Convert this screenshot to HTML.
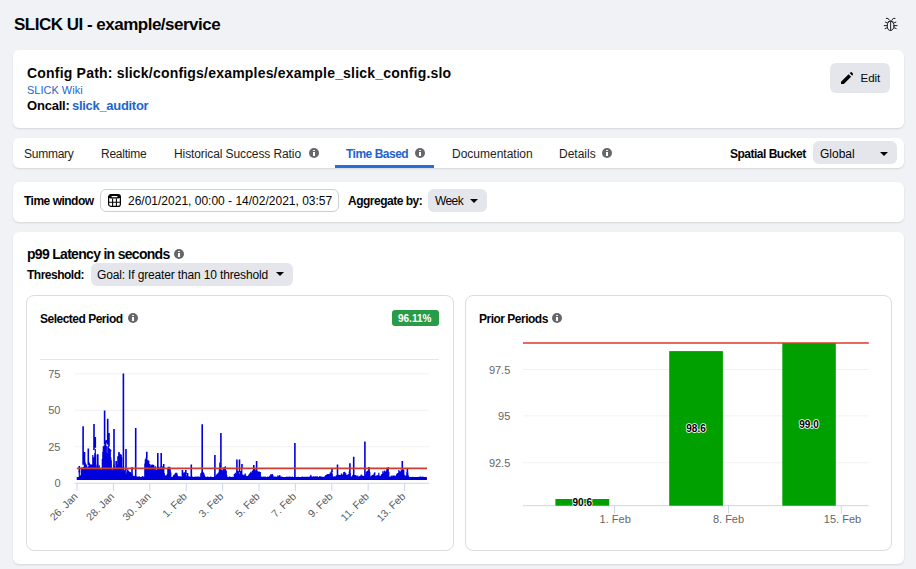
<!DOCTYPE html>
<html><head><meta charset="utf-8">
<style>
*{box-sizing:border-box;margin:0;padding:0}
html,body{width:916px;height:569px;overflow:hidden;background:#f0f2f5;font-family:"Liberation Sans",sans-serif;color:#1c1e21}
.a{position:absolute;white-space:nowrap}
.card{position:absolute;background:#fff;border-radius:6px;box-shadow:0 1px 2px rgba(0,0,0,0.12)}
.b{font-weight:700}
.info{position:absolute;width:10px;height:10px;border-radius:50%;background:#65676b}
.info:before{content:"";position:absolute;left:4.2px;top:1.6px;width:1.6px;height:1.6px;background:#fff;border-radius:50%}
.info:after{content:"";position:absolute;left:4.2px;top:4px;width:1.6px;height:4.3px;background:#fff}
.dd{position:absolute;background:#e4e6eb;border-radius:6px}
.caret{position:absolute;width:0;height:0;border-left:5px solid transparent;border-right:5px solid transparent;border-top:5px solid #050505}
.inner{position:absolute;background:#fff;border:1px solid #dcdcdc;border-radius:8px}
</style></head><body>

<div class="a b" style="left:14px;top:15px;font-size:17px;letter-spacing:-0.5px;color:#050505">SLICK UI - example/service</div>
<!-- bug icon -->
<svg class="a" style="left:878px;top:12px" width="24" height="24" viewBox="0 0 24 24" fill="none" stroke="#1c1e21" stroke-width="1" stroke-linecap="round">
 <ellipse cx="12.65" cy="13.9" rx="3.4" ry="4.6"/>
 <path d="M12.65 10v8.2M10 9.9Q12.65 7.2 15.3 9.9M8.3 6.4h1.8l1.1 1.6M17 6.4h-1.8l-1.1 1.6M7.4 10.1l1.9 0.8M17.9 10.1l-1.9 0.8M6.2 13.6h3M19.1 13.6h-3M7.1 16.6l2-0.9M18.2 16.6l-2-0.9"/>
</svg>

<!-- card 1 -->
<div class="card" style="left:13px;top:50px;width:891px;height:78px"></div>
<div class="a b" style="left:27px;top:65px;font-size:14px;letter-spacing:0.2px;color:#050505">Config Path: slick/configs/examples/example_slick_config.slo</div>
<div class="a" style="left:27px;top:84px;font-size:11px;color:#1d64cf">SLICK Wiki</div>
<div class="a b" style="left:27px;top:98px;font-size:13px;letter-spacing:-0.2px;color:#050505">Oncall:</div>
<div class="a b" style="left:72px;top:98px;font-size:13px;letter-spacing:-0.3px;color:#1d64cf">slick_auditor</div>
<div class="dd" style="left:830px;top:63px;width:60px;height:30px"></div>
<svg class="a" style="left:841px;top:72px" width="12.3" height="12.3" viewBox="0 0 13 13"><path d="M0 10.3V13h2.7l8-8-2.7-2.7zM12.6 2.7a.7.7 0 0 0 0-1L11.3.2a.7.7 0 0 0-1 0L9.2 1.3l2.7 2.7z" fill="#050505"/></svg>
<div class="a" style="left:860.5px;top:71.5px;font-size:11.5px;color:#050505">Edit</div>

<!-- card 2 tabs -->
<div class="card" style="left:13px;top:138px;width:891px;height:30px"></div>
<div class="a" style="left:24px;top:147px;font-size:12px;letter-spacing:-0.25px;color:#1c1e21">Summary</div>
<div class="a" style="left:101px;top:147px;font-size:12px;letter-spacing:-0.25px;color:#1c1e21">Realtime</div>
<div class="a" style="left:174px;top:147px;font-size:12px;letter-spacing:-0.1px;color:#1c1e21">Historical Success Ratio</div>
<div class="info" style="left:309px;top:148px"></div>
<div class="a b" style="left:346px;top:147px;font-size:12px;letter-spacing:-0.5px;color:#1d64cf">Time Based</div>
<div class="info" style="left:415px;top:148px"></div>
<div style="position:absolute;left:335px;top:165px;width:99px;height:3px;background:#2a6dd6"></div>
<div class="a" style="left:452px;top:147px;font-size:12px;color:#1c1e21">Documentation</div>
<div class="a" style="left:559px;top:147px;font-size:12px;color:#1c1e21">Details</div>
<div class="info" style="left:602px;top:148px"></div>
<div class="a b" style="left:730px;top:147px;font-size:12px;letter-spacing:-0.5px;color:#050505">Spatial Bucket</div>
<div class="dd" style="left:813px;top:141px;width:84px;height:23px"></div>
<div class="a" style="left:820px;top:147px;font-size:12px;color:#050505">Global</div>
<div class="caret" style="left:879.5px;top:152px;border-left-width:4px;border-right-width:4px;border-top-width:4.5px"></div>

<!-- card 3 time window -->
<div class="card" style="left:13px;top:182px;width:891px;height:40px"></div>
<div class="a b" style="left:24px;top:194px;font-size:12px;letter-spacing:-0.5px;color:#050505">Time window</div>
<div style="position:absolute;left:100px;top:189px;width:239px;height:23px;border:1px solid #ccd0d5;border-radius:6px;background:#fff"></div>
<svg class="a" style="left:108px;top:194px" width="13" height="13" viewBox="0 0 13 13">
 <rect x="0.6" y="0.6" width="11.8" height="11.8" rx="2.5" fill="none" stroke="#050505" stroke-width="1.2"/>
 <rect x="0.6" y="0.6" width="11.8" height="4" rx="2" fill="#050505"/>
 <rect x="3.5" y="2.1" width="6" height="1.2" rx="0.6" fill="#fff"/>
 <path d="M0.6 8.2h11.8M4.6 4.5v8M8.4 4.5v8" stroke="#050505" stroke-width="1.1"/>
</svg>
<div class="a" style="left:128px;top:194px;font-size:12px;color:#050505">26/01/2021, 00:00 - 14/02/2021, 03:57</div>
<div class="a b" style="left:348px;top:194px;font-size:12px;letter-spacing:-0.5px;color:#050505">Aggregate by:</div>
<div class="dd" style="left:428px;top:189px;width:59px;height:23px"></div>
<div class="a" style="left:435px;top:194px;font-size:12px;letter-spacing:-0.6px;color:#050505">Week</div>
<div class="caret" style="left:470px;top:199px;border-left-width:4px;border-right-width:4px;border-top-width:4px"></div>

<!-- main card -->
<div class="card" style="left:13px;top:232px;width:891px;height:332px"></div>
<div class="a b" style="left:27px;top:246px;font-size:14px;letter-spacing:-0.7px;color:#050505">p99 Latency in seconds</div>
<div class="info" style="left:174px;top:249px"></div>
<div class="a b" style="left:27px;top:268px;font-size:12px;letter-spacing:-0.5px;color:#050505">Threshold:</div>
<div class="dd" style="left:91px;top:263px;width:202px;height:23px"></div>
<div class="a" style="left:97px;top:268px;font-size:12px;letter-spacing:-0.15px;color:#050505">Goal: If greater than 10 threshold</div>
<div class="caret" style="left:276px;top:272px;border-left-width:4px;border-right-width:4px;border-top-width:4px"></div>

<!-- left chart card -->
<div class="inner" style="left:26px;top:295px;width:428px;height:256px"></div>
<div class="a b" style="left:40px;top:312px;font-size:12px;letter-spacing:-0.5px;color:#050505">Selected Period</div>
<div class="info" style="left:128px;top:313px"></div>
<div style="position:absolute;left:392px;top:310px;width:47px;height:16px;border-radius:3px;background:#2a9c48"></div>
<div class="a b" style="left:398px;top:313px;font-size:10px;color:#fff">96.11%</div>
<div style="position:absolute;left:40px;top:359px;width:399px;height:1px;background:#e4e6eb"></div>

<!-- right chart card -->
<div class="inner" style="left:465px;top:295px;width:427px;height:256px"></div>
<div class="a b" style="left:479px;top:312px;font-size:12px;letter-spacing:-0.5px;color:#050505">Prior Periods</div>
<div class="info" style="left:552px;top:313px"></div>

<!--CHARTS-->
<svg class="a" style="left:0;top:0" width="916" height="569" viewBox="0 0 916 569" font-family="Liberation Sans, sans-serif">
<path d="M74.4 373.8H429" stroke="#f1f1f1" stroke-width="1"/>
<path d="M74.4 410.3H429" stroke="#f1f1f1" stroke-width="1"/>
<path d="M74.4 446.8H429" stroke="#f1f1f1" stroke-width="1"/>
<path d="M74.4 483.3H429" stroke="#ccd6eb" stroke-width="1"/>
<path d="M77.0 483.3V491" stroke="#ccd6eb" stroke-width="1"/>
<path d="M113.4 483.3V491" stroke="#ccd6eb" stroke-width="1"/>
<path d="M149.8 483.3V491" stroke="#ccd6eb" stroke-width="1"/>
<path d="M186.2 483.3V491" stroke="#ccd6eb" stroke-width="1"/>
<path d="M222.6 483.3V491" stroke="#ccd6eb" stroke-width="1"/>
<path d="M259.0 483.3V491" stroke="#ccd6eb" stroke-width="1"/>
<path d="M295.4 483.3V491" stroke="#ccd6eb" stroke-width="1"/>
<path d="M331.8 483.3V491" stroke="#ccd6eb" stroke-width="1"/>
<path d="M368.2 483.3V491" stroke="#ccd6eb" stroke-width="1"/>
<path d="M404.6 483.3V491" stroke="#ccd6eb" stroke-width="1"/>
<text x="60.5" y="377.8" text-anchor="end" font-size="11" fill="#666">75</text>
<text x="60.5" y="414.3" text-anchor="end" font-size="11" fill="#666">50</text>
<text x="60.5" y="450.8" text-anchor="end" font-size="11" fill="#666">25</text>
<text x="60.5" y="487.3" text-anchor="end" font-size="11" fill="#666">0</text>
<text x="78.5" y="497" text-anchor="end" font-size="10.5" fill="#5a5a5a" transform="rotate(-45 78.5 497)">26. Jan</text>
<text x="114.9" y="497" text-anchor="end" font-size="10.5" fill="#5a5a5a" transform="rotate(-45 114.9 497)">28. Jan</text>
<text x="151.3" y="497" text-anchor="end" font-size="10.5" fill="#5a5a5a" transform="rotate(-45 151.3 497)">30. Jan</text>
<text x="187.7" y="497" text-anchor="end" font-size="10.5" fill="#5a5a5a" transform="rotate(-45 187.7 497)">1. Feb</text>
<text x="224.1" y="497" text-anchor="end" font-size="10.5" fill="#5a5a5a" transform="rotate(-45 224.1 497)">3. Feb</text>
<text x="260.5" y="497" text-anchor="end" font-size="10.5" fill="#5a5a5a" transform="rotate(-45 260.5 497)">5. Feb</text>
<text x="296.9" y="497" text-anchor="end" font-size="10.5" fill="#5a5a5a" transform="rotate(-45 296.9 497)">7. Feb</text>
<text x="333.3" y="497" text-anchor="end" font-size="10.5" fill="#5a5a5a" transform="rotate(-45 333.3 497)">9. Feb</text>
<text x="369.7" y="497" text-anchor="end" font-size="10.5" fill="#5a5a5a" transform="rotate(-45 369.7 497)">11. Feb</text>
<text x="406.1" y="497" text-anchor="end" font-size="10.5" fill="#5a5a5a" transform="rotate(-45 406.1 497)">13. Feb</text>
<path d="M77.30 479.9V477.0M77.80 479.9V477.1M78.30 479.9V476.9M78.80 479.9V477.0M79.30 479.9V471.1M79.80 479.9V475.9M80.30 479.9V476.6M80.80 479.9V475.0M81.30 479.9V469.2M81.80 479.9V467.4M82.30 479.9V469.1M82.80 479.9V468.5M83.30 479.9V467.0M83.80 479.9V471.8M84.30 479.9V462.3M84.80 479.9V463.1M85.30 479.9V462.4M85.80 479.9V468.0M86.30 479.9V464.4M86.80 479.9V466.2M87.30 479.9V468.9M87.80 479.9V469.3M88.30 479.9V466.7M88.80 479.9V465.9M89.30 479.9V462.6M89.80 479.9V472.9M90.30 479.9V464.3M90.80 479.9V464.4M91.30 479.9V470.0M91.80 479.9V464.6M92.30 479.9V471.4M92.80 479.9V454.9M93.30 479.9V457.4M93.80 479.9V458.7M94.30 479.9V456.8M94.80 479.9V453.0M95.30 479.9V448.9M95.80 479.9V454.6M96.30 479.9V466.5M96.80 479.9V467.5M97.30 479.9V464.6M97.80 479.9V464.3M98.30 479.9V467.2M98.80 479.9V466.4M99.30 479.9V465.2M99.80 479.9V469.0M100.30 479.9V468.8M100.80 479.9V470.1M101.30 479.9V473.0M101.80 479.9V467.8M102.30 479.9V458.9M102.80 479.9V451.7M103.30 479.9V446.3M103.80 479.9V454.4M104.30 479.9V445.3M104.80 479.9V452.7M105.30 479.9V442.0M105.80 479.9V441.0M106.30 479.9V445.9M106.80 479.9V453.2M107.30 479.9V457.4M107.80 479.9V446.5M108.30 479.9V445.7M108.80 479.9V453.0M109.30 479.9V448.3M109.80 479.9V467.1M110.30 479.9V449.2M110.80 479.9V457.6M111.30 479.9V460.3M111.80 479.9V471.6M112.30 479.9V470.3M112.80 479.9V468.4M113.30 479.9V469.2M113.80 479.9V464.8M114.30 479.9V465.6M114.80 479.9V465.6M115.30 479.9V468.6M115.80 479.9V470.1M116.30 479.9V463.2M116.80 479.9V471.5M117.30 479.9V464.6M117.80 479.9V456.3M118.30 479.9V467.3M118.80 479.9V453.9M119.30 479.9V455.8M119.80 479.9V453.8M120.30 479.9V455.9M120.80 479.9V454.2M121.30 479.9V455.0M121.80 479.9V457.0M122.30 479.9V466.7M122.80 479.9V471.2M123.30 479.9V474.7M123.80 479.9V469.9M124.30 479.9V471.4M124.80 479.9V470.5M125.30 479.9V469.4M125.80 479.9V473.8M126.30 479.9V474.2M126.80 479.9V471.2M127.30 479.9V470.3M127.80 479.9V469.2M128.30 479.9V473.0M128.80 479.9V471.1M129.30 479.9V473.2M129.80 479.9V472.1M130.30 479.9V471.9M130.80 479.9V473.1M131.30 479.9V474.1M131.80 479.9V473.5M132.30 479.9V475.1M132.80 479.9V475.7M133.30 479.9V475.8M133.80 479.9V475.7M134.30 479.9V476.1M134.80 479.9V477.1M135.30 479.9V477.1M135.80 479.9V476.9M136.30 479.9V476.7M136.80 479.9V476.2M137.30 479.9V476.8M137.80 479.9V477.1M138.30 479.9V477.1M138.80 479.9V476.6M139.30 479.9V476.3M139.80 479.9V477.1M140.30 479.9V477.1M140.80 479.9V477.1M141.30 479.9V477.1M141.80 479.9V476.8M142.30 479.9V476.5M142.80 479.9V476.1M143.30 479.9V477.1M143.80 479.9V477.1M144.30 479.9V476.8M144.80 479.9V463.4M145.30 479.9V459.6M145.80 479.9V458.7M146.30 479.9V457.3M146.80 479.9V457.8M147.30 479.9V464.1M147.80 479.9V459.8M148.30 479.9V462.8M148.80 479.9V460.8M149.30 479.9V464.2M149.80 479.9V464.1M150.30 479.9V466.5M150.80 479.9V468.1M151.30 479.9V464.8M151.80 479.9V465.5M152.30 479.9V464.7M152.80 479.9V464.5M153.30 479.9V465.6M153.80 479.9V465.1M154.30 479.9V468.2M154.80 479.9V473.3M155.30 479.9V466.3M155.80 479.9V470.2M156.30 479.9V470.1M156.80 479.9V469.7M157.30 479.9V466.6M157.80 479.9V469.7M158.30 479.9V466.8M158.80 479.9V466.8M159.30 479.9V467.7M159.80 479.9V469.7M160.30 479.9V467.5M160.80 479.9V466.6M161.30 479.9V467.7M161.80 479.9V467.7M162.30 479.9V468.6M162.80 479.9V466.2M163.30 479.9V466.6M163.80 479.9V468.9M164.30 479.9V473.0M164.80 479.9V475.2M165.30 479.9V476.6M165.80 479.9V475.8M166.30 479.9V475.3M166.80 479.9V475.8M167.30 479.9V474.0M167.80 479.9V469.0M168.30 479.9V466.7M168.80 479.9V468.8M169.30 479.9V468.9M169.80 479.9V466.8M170.30 479.9V469.5M170.80 479.9V472.5M171.30 479.9V477.1M171.80 479.9V477.1M172.30 479.9V477.1M172.80 479.9V477.1M173.30 479.9V476.1M173.80 479.9V474.9M174.30 479.9V474.5M174.80 479.9V474.6M175.30 479.9V473.3M175.80 479.9V472.7M176.30 479.9V472.8M176.80 479.9V472.8M177.30 479.9V474.5M177.80 479.9V475.9M178.30 479.9V477.1M178.80 479.9V476.3M179.30 479.9V477.1M179.80 479.9V476.3M180.30 479.9V476.2M180.80 479.9V477.1M181.30 479.9V476.7M181.80 479.9V477.1M182.30 479.9V476.1M182.80 479.9V475.2M183.30 479.9V472.8M183.80 479.9V476.9M184.30 479.9V472.2M184.80 479.9V474.4M185.30 479.9V472.6M185.80 479.9V472.8M186.30 479.9V475.3M186.80 479.9V476.7M187.30 479.9V476.7M187.80 479.9V477.1M188.30 479.9V477.1M188.80 479.9V476.3M189.30 479.9V477.1M189.80 479.9V476.4M190.30 479.9V476.7M190.80 479.9V477.1M191.30 479.9V477.1M191.80 479.9V477.1M192.30 479.9V476.6M192.80 479.9V477.1M193.30 479.9V477.1M193.80 479.9V477.1M194.30 479.9V477.1M194.80 479.9V476.7M195.30 479.9V476.6M195.80 479.9V477.1M196.30 479.9V477.0M196.80 479.9V476.6M197.30 479.9V476.5M197.80 479.9V476.7M198.30 479.9V477.1M198.80 479.9V476.6M199.30 479.9V476.7M199.80 479.9V477.1M200.30 479.9V477.1M200.80 479.9V473.3M201.30 479.9V476.1M201.80 479.9V472.1M202.30 479.9V471.2M202.80 479.9V473.0M203.30 479.9V472.3M203.80 479.9V473.2M204.30 479.9V474.4M204.80 479.9V476.3M205.30 479.9V477.1M205.80 479.9V476.7M206.30 479.9V477.1M206.80 479.9V477.1M207.30 479.9V477.1M207.80 479.9V476.5M208.30 479.9V477.0M208.80 479.9V477.0M209.30 479.9V476.9M209.80 479.9V477.1M210.30 479.9V476.7M210.80 479.9V476.5M211.30 479.9V477.1M211.80 479.9V477.0M212.30 479.9V477.1M212.80 479.9V477.1M213.30 479.9V476.9M213.80 479.9V477.1M214.30 479.9V476.8M214.80 479.9V476.2M215.30 479.9V476.8M215.80 479.9V476.5M216.30 479.9V474.9M216.80 479.9V474.2M217.30 479.9V475.6M217.80 479.9V473.3M218.30 479.9V475.7M218.80 479.9V472.2M219.30 479.9V469.5M219.80 479.9V462.6M220.30 479.9V466.5M220.80 479.9V465.8M221.30 479.9V470.3M221.80 479.9V469.8M222.30 479.9V471.5M222.80 479.9V470.6M223.30 479.9V467.4M223.80 479.9V468.7M224.30 479.9V467.2M224.80 479.9V467.4M225.30 479.9V466.2M225.80 479.9V470.4M226.30 479.9V470.5M226.80 479.9V475.3M227.30 479.9V477.1M227.80 479.9V477.0M228.30 479.9V476.9M228.80 479.9V477.1M229.30 479.9V476.4M229.80 479.9V476.6M230.30 479.9V477.1M230.80 479.9V477.1M231.30 479.9V477.1M231.80 479.9V477.1M232.30 479.9V476.8M232.80 479.9V476.9M233.30 479.9V477.1M233.80 479.9V477.1M234.30 479.9V474.1M234.80 479.9V477.0M235.30 479.9V472.7M235.80 479.9V473.8M236.30 479.9V473.5M236.80 479.9V473.0M237.30 479.9V471.0M237.80 479.9V472.2M238.30 479.9V470.9M238.80 479.9V472.5M239.30 479.9V474.3M239.80 479.9V476.5M240.30 479.9V471.2M240.80 479.9V471.1M241.30 479.9V471.3M241.80 479.9V468.0M242.30 479.9V475.5M242.80 479.9V474.6M243.30 479.9V476.8M243.80 479.9V475.3M244.30 479.9V475.8M244.80 479.9V474.2M245.30 479.9V473.6M245.80 479.9V475.4M246.30 479.9V476.3M246.80 479.9V476.9M247.30 479.9V476.1M247.80 479.9V476.2M248.30 479.9V475.7M248.80 479.9V475.1M249.30 479.9V474.1M249.80 479.9V473.6M250.30 479.9V473.0M250.80 479.9V471.8M251.30 479.9V472.7M251.80 479.9V475.2M252.30 479.9V471.0M252.80 479.9V470.3M253.30 479.9V472.1M253.80 479.9V468.9M254.30 479.9V476.0M254.80 479.9V469.1M255.30 479.9V474.4M255.80 479.9V470.3M256.30 479.9V472.4M256.80 479.9V470.8M257.30 479.9V471.0M257.80 479.9V472.5M258.30 479.9V471.5M258.80 479.9V472.1M259.30 479.9V471.6M259.80 479.9V472.7M260.30 479.9V472.0M260.80 479.9V476.6M261.30 479.9V476.5M261.80 479.9V476.9M262.30 479.9V476.8M262.80 479.9V477.1M263.30 479.9V477.1M263.80 479.9V476.4M264.30 479.9V477.1M264.80 479.9V477.1M265.30 479.9V476.4M265.80 479.9V477.1M266.30 479.9V476.9M266.80 479.9V477.1M267.30 479.9V477.1M267.80 479.9V476.5M268.30 479.9V477.1M268.80 479.9V477.1M269.30 479.9V476.8M269.80 479.9V476.0M270.30 479.9V475.2M270.80 479.9V474.2M271.30 479.9V474.6M271.80 479.9V474.8M272.30 479.9V473.9M272.80 479.9V475.1M273.30 479.9V476.5M273.80 479.9V477.1M274.30 479.9V476.5M274.80 479.9V477.1M275.30 479.9V477.0M275.80 479.9V476.4M276.30 479.9V477.1M276.80 479.9V477.1M277.30 479.9V476.7M277.80 479.9V475.6M278.30 479.9V476.4M278.80 479.9V476.2M279.30 479.9V475.8M279.80 479.9V475.1M280.30 479.9V476.4M280.80 479.9V476.6M281.30 479.9V476.6M281.80 479.9V476.6M282.30 479.9V477.1M282.80 479.9V477.1M283.30 479.9V477.1M283.80 479.9V476.9M284.30 479.9V477.1M284.80 479.9V477.1M285.30 479.9V477.1M285.80 479.9V477.1M286.30 479.9V477.0M286.80 479.9V476.6M287.30 479.9V477.1M287.80 479.9V477.1M288.30 479.9V476.8M288.80 479.9V476.8M289.30 479.9V477.1M289.80 479.9V476.4M290.30 479.9V476.8M290.80 479.9V477.1M291.30 479.9V477.1M291.80 479.9V477.1M292.30 479.9V476.4M292.80 479.9V477.1M293.30 479.9V477.1M293.80 479.9V477.0M294.30 479.9V477.1M294.80 479.9V476.8M295.30 479.9V477.1M295.80 479.9V477.1M296.30 479.9V477.0M296.80 479.9V477.1M297.30 479.9V477.1M297.80 479.9V477.1M298.30 479.9V476.8M298.80 479.9V477.1M299.30 479.9V476.9M299.80 479.9V477.1M300.30 479.9V477.1M300.80 479.9V477.1M301.30 479.9V477.1M301.80 479.9V476.9M302.30 479.9V476.6M302.80 479.9V477.1M303.30 479.9V477.1M303.80 479.9V476.8M304.30 479.9V476.7M304.80 479.9V476.9M305.30 479.9V477.1M305.80 479.9V476.8M306.30 479.9V477.1M306.80 479.9V476.7M307.30 479.9V476.9M307.80 479.9V476.7M308.30 479.9V477.0M308.80 479.9V477.0M309.30 479.9V476.8M309.80 479.9V477.0M310.30 479.9V476.0M310.80 479.9V474.8M311.30 479.9V476.2M311.80 479.9V477.1M312.30 479.9V476.8M312.80 479.9V476.4M313.30 479.9V477.0M313.80 479.9V476.3M314.30 479.9V476.4M314.80 479.9V476.8M315.30 479.9V477.1M315.80 479.9V476.2M316.30 479.9V476.7M316.80 479.9V476.4M317.30 479.9V476.3M317.80 479.9V476.7M318.30 479.9V477.1M318.80 479.9V477.1M319.30 479.9V477.1M319.80 479.9V476.1M320.30 479.9V477.0M320.80 479.9V476.4M321.30 479.9V476.6M321.80 479.9V477.1M322.30 479.9V476.8M322.80 479.9V477.1M323.30 479.9V477.1M323.80 479.9V476.9M324.30 479.9V476.4M324.80 479.9V476.6M325.30 479.9V476.2M325.80 479.9V475.1M326.30 479.9V475.2M326.80 479.9V474.6M327.30 479.9V474.5M327.80 479.9V474.0M328.30 479.9V474.3M328.80 479.9V475.1M329.30 479.9V473.9M329.80 479.9V474.1M330.30 479.9V472.6M330.80 479.9V474.3M331.30 479.9V471.3M331.80 479.9V471.6M332.30 479.9V473.7M332.80 479.9V476.4M333.30 479.9V476.7M333.80 479.9V476.7M334.30 479.9V476.2M334.80 479.9V476.8M335.30 479.9V476.4M335.80 479.9V476.8M336.30 479.9V475.3M336.80 479.9V475.4M337.30 479.9V475.4M337.80 479.9V475.3M338.30 479.9V474.8M338.80 479.9V476.8M339.30 479.9V475.0M339.80 479.9V475.9M340.30 479.9V475.1M340.80 479.9V475.4M341.30 479.9V473.6M341.80 479.9V474.4M342.30 479.9V475.0M342.80 479.9V475.5M343.30 479.9V473.5M343.80 479.9V472.0M344.30 479.9V473.9M344.80 479.9V471.7M345.30 479.9V473.6M345.80 479.9V473.2M346.30 479.9V475.1M346.80 479.9V475.2M347.30 479.9V475.9M347.80 479.9V474.6M348.30 479.9V477.1M348.80 479.9V474.0M349.30 479.9V471.6M349.80 479.9V473.1M350.30 479.9V472.3M350.80 479.9V476.4M351.30 479.9V476.8M351.80 479.9V476.6M352.30 479.9V476.3M352.80 479.9V475.0M353.30 479.9V474.9M353.80 479.9V474.8M354.30 479.9V475.5M354.80 479.9V475.0M355.30 479.9V475.1M355.80 479.9V476.7M356.30 479.9V475.6M356.80 479.9V476.5M357.30 479.9V476.3M357.80 479.9V475.6M358.30 479.9V477.1M358.80 479.9V476.8M359.30 479.9V476.5M359.80 479.9V476.1M360.30 479.9V477.1M360.80 479.9V475.5M361.30 479.9V474.6M361.80 479.9V475.7M362.30 479.9V475.4M362.80 479.9V476.0M363.30 479.9V476.9M363.80 479.9V475.9M364.30 479.9V475.6M364.80 479.9V475.6M365.30 479.9V475.0M365.80 479.9V474.2M366.30 479.9V472.0M366.80 479.9V471.2M367.30 479.9V471.4M367.80 479.9V470.4M368.30 479.9V471.9M368.80 479.9V468.6M369.30 479.9V467.9M369.80 479.9V471.8M370.30 479.9V477.1M370.80 479.9V476.8M371.30 479.9V475.7M371.80 479.9V476.9M372.30 479.9V475.1M372.80 479.9V475.2M373.30 479.9V474.6M373.80 479.9V476.7M374.30 479.9V473.0M374.80 479.9V472.3M375.30 479.9V475.9M375.80 479.9V476.3M376.30 479.9V476.0M376.80 479.9V475.2M377.30 479.9V477.1M377.80 479.9V475.2M378.30 479.9V475.1M378.80 479.9V472.8M379.30 479.9V475.4M379.80 479.9V476.0M380.30 479.9V476.8M380.80 479.9V475.9M381.30 479.9V474.6M381.80 479.9V474.2M382.30 479.9V474.0M382.80 479.9V471.2M383.30 479.9V472.7M383.80 479.9V472.8M384.30 479.9V470.5M384.80 479.9V472.5M385.30 479.9V471.6M385.80 479.9V475.4M386.30 479.9V470.7M386.80 479.9V467.7M387.30 479.9V468.2M387.80 479.9V468.8M388.30 479.9V467.0M388.80 479.9V472.0M389.30 479.9V477.1M389.80 479.9V476.7M390.30 479.9V477.0M390.80 479.9V476.3M391.30 479.9V476.2M391.80 479.9V475.6M392.30 479.9V476.2M392.80 479.9V476.3M393.30 479.9V475.6M393.80 479.9V476.1M394.30 479.9V475.4M394.80 479.9V475.8M395.30 479.9V476.9M395.80 479.9V476.3M396.30 479.9V475.2M396.80 479.9V473.7M397.30 479.9V474.7M397.80 479.9V473.0M398.30 479.9V474.3M398.80 479.9V470.1M399.30 479.9V472.3M399.80 479.9V471.3M400.30 479.9V475.5M400.80 479.9V471.5M401.30 479.9V469.5M401.80 479.9V470.4M402.30 479.9V469.5M402.80 479.9V468.4M403.30 479.9V471.1M403.80 479.9V469.8M404.30 479.9V474.8M404.80 479.9V476.9M405.30 479.9V475.8M405.80 479.9V475.6M406.30 479.9V476.1M406.80 479.9V471.9M407.30 479.9V472.5M407.80 479.9V472.3M408.30 479.9V475.3M408.80 479.9V476.5M409.30 479.9V477.1M409.80 479.9V477.1M410.30 479.9V477.1M410.80 479.9V477.1M411.30 479.9V477.0M411.80 479.9V477.1M412.30 479.9V477.1M412.80 479.9V476.8M413.30 479.9V477.1M413.80 479.9V477.1M414.30 479.9V476.9M414.80 479.9V477.0M415.30 479.9V477.1M415.80 479.9V477.1M416.30 479.9V477.1M416.80 479.9V477.0M417.30 479.9V477.1M417.80 479.9V477.1M418.30 479.9V477.1M418.80 479.9V477.0M419.30 479.9V476.8M419.80 479.9V477.1M420.30 479.9V476.5M420.80 479.9V476.9M421.30 479.9V476.7M421.80 479.9V476.9M422.30 479.9V477.1M422.80 479.9V476.6M423.30 479.9V477.1M423.80 479.9V477.1M424.30 479.9V477.0M424.80 479.9V477.1M425.30 479.9V477.1M425.80 479.9V477.1M426.30 479.9V477.1" fill="none" stroke="#0000dd" stroke-width="1.2"/>
<path d="M182.4 476.8V470.0M185.8 474.0V470.0M187.6 478.1V473.0M191.3 478.4V464.6M79.3 472.5V466.0M83.1 464.7V426.3M84.5 463.1V452.0M88.3 465.3V448.6M94.0 450.1V424.0M95.3 447.7V437.0M97.8 465.7V454.3M104.6 444.4V410.5M106.5 442.8V440.0M107.7 444.6V418.8M109.0 446.5V433.0M110.6 451.2V450.0M114.0 466.0V429.0M116.2 465.0V461.0M119.0 455.0V452.0M123.4 471.6V373.6M126.0 470.4V449.0M132.0 475.5V467.0M135.7 478.1V428.0M146.8 458.1V451.8M157.8 467.5V453.0M161.2 467.3V453.0M163.7 468.0V464.0M202.2 473.0V424.3M214.9 477.6V454.9M220.9 467.1V433.1M236.9 473.1V459.4M239.5 472.2V459.4M242.0 468.0V464.0M253.8 470.0V465.1M256.6 472.0V461.1M294.9 478.4V442.9M332.0 472.0V468.6M337.5 477.0V464.6M349.9 472.0V463.2M353.7 476.0V456.8M364.9 475.8V441.5M368.9 469.4V466.9M402.3 468.0V461.1M407.4 472.0V468.6" fill="none" stroke="#0000dd" stroke-width="1.6"/>
<path d="M76.9 468.4H427" stroke="#cf3b30" stroke-width="1.6"/>
<path d="M523 369.5H868.8" stroke="#f1f1f1" stroke-width="1"/>
<path d="M523 415.9H868.8" stroke="#f1f1f1" stroke-width="1"/>
<path d="M523 462.8H868.8" stroke="#f1f1f1" stroke-width="1"/>
<path d="M523 505.7H868.8" stroke="#ccd6eb" stroke-width="1"/>
<path d="M614.6 505.7V513.7" stroke="#ccd6eb" stroke-width="1"/>
<path d="M728.5 505.7V513.7" stroke="#ccd6eb" stroke-width="1"/>
<path d="M841.3 505.7V513.7" stroke="#ccd6eb" stroke-width="1"/>
<text x="510.3" y="373.5" text-anchor="end" font-size="11" fill="#666">97.5</text>
<text x="510.3" y="419.9" text-anchor="end" font-size="11" fill="#666">95</text>
<text x="510.3" y="466.8" text-anchor="end" font-size="11" fill="#666">92.5</text>
<text x="615.2" y="522.5" text-anchor="middle" font-size="11" fill="#666">1. Feb</text>
<text x="728.5" y="522.5" text-anchor="middle" font-size="11" fill="#666">8. Feb</text>
<text x="842.5" y="522.5" text-anchor="middle" font-size="11" fill="#666">15. Feb</text>
<path d="M523 343H868.8" stroke="#e86a5e" stroke-width="2"/>
<rect x="555.4" y="499.0" width="53.8" height="6.7" fill="#00a000"/>
<text x="582.3" y="505.5" text-anchor="middle" font-size="10" font-weight="700" fill="#000" stroke="#fff" stroke-width="1.6" paint-order="stroke" stroke-linejoin="round">90.6</text>
<rect x="669.2" y="351.1" width="53.7" height="154.6" fill="#00a000"/>
<text x="696.0" y="431.8" text-anchor="middle" font-size="10" font-weight="700" fill="#000" stroke="#fff" stroke-width="1.6" paint-order="stroke" stroke-linejoin="round">98.6</text>
<rect x="782.3" y="343.2" width="53.5" height="162.5" fill="#00a000"/>
<text x="809.0" y="428.3" text-anchor="middle" font-size="10" font-weight="700" fill="#000" stroke="#fff" stroke-width="1.6" paint-order="stroke" stroke-linejoin="round">99.0</text>
</svg>
<!--/CHARTS-->
</body></html>
